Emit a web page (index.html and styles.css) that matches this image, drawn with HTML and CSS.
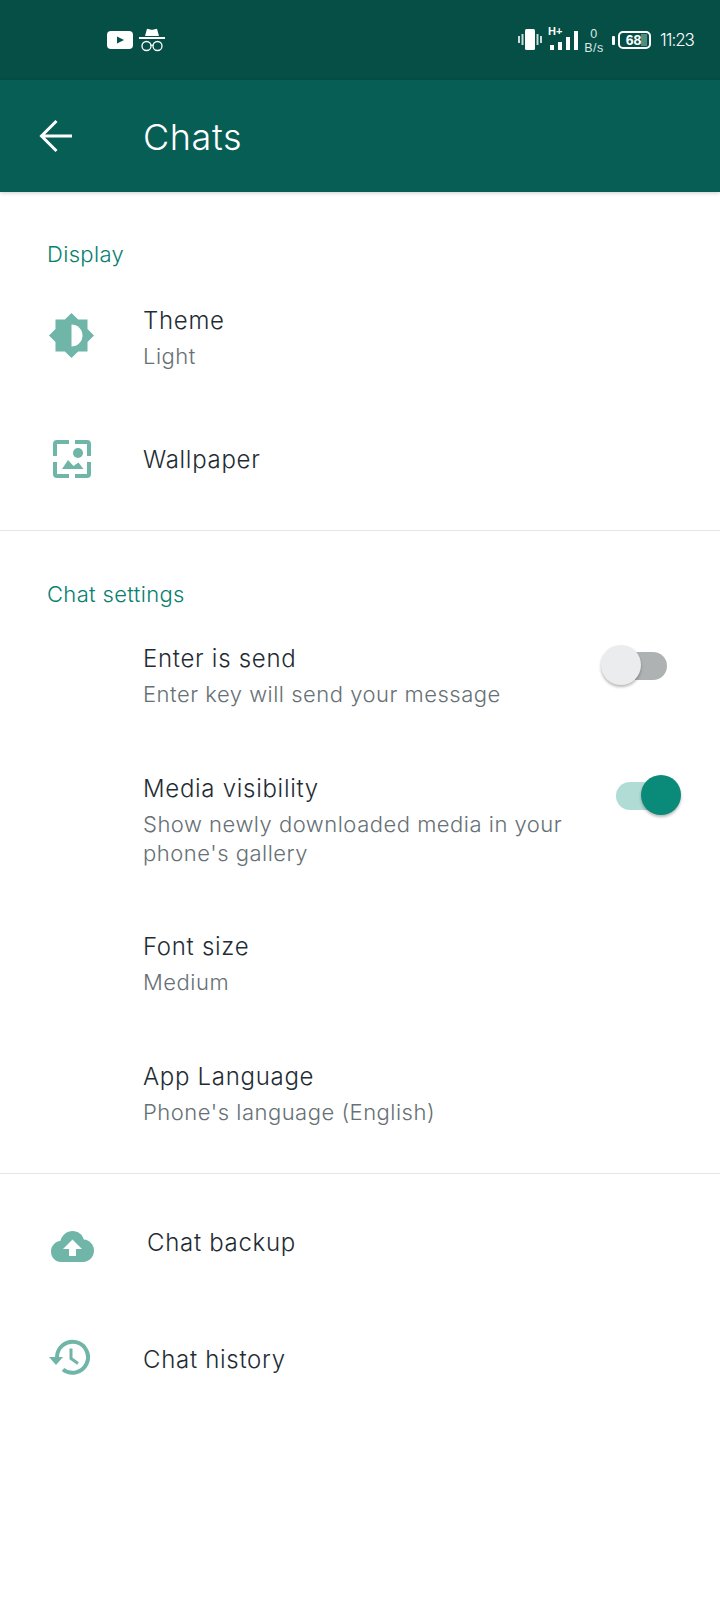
FILE: index.html
```html
<!DOCTYPE html>
<html lang="en">
<head>
<meta charset="utf-8">
<title>Chats</title>
<link rel="stylesheet" href="styles.css">
</head>
<body>
<div class="page">
  <header class="status">
    <div class="status-left">
      <svg class="ic-yt" viewBox="0 0 26 18"><path fill="#fff" d="M4 0h18a4 4 0 0 1 4 4v10a4 4 0 0 1-4 4H4a4 4 0 0 1-4-4V4a4 4 0 0 1 4-4z"/><path fill="#06514a" d="M10 5.500v7l7-3.500z"/></svg>
      <svg class="ic-spy" viewBox="0 0 26 24"><path fill="#fff" d="M6 8l1.800-6.500q.3-1 1.300-.6l2.100.6q1.800.5 3.600 0l2.100-.6q1-.4 1.300.6L20 8z"/><rect fill="#fff" y="9" width="26" height="2"/><g fill="none" stroke="#fff" stroke-width="1.300"><circle cx="7.500" cy="18" r="4.500"/><circle cx="18.500" cy="18" r="4.500"/><path d="M12 17.500q1-.8 2 0"/></g></svg>
    </div>
    <div class="status-right">
      <svg class="ic-vib" viewBox="0 0 24 24"><rect fill="#fff" x="7" y="1" width="10" height="21" rx="1.500"/><rect fill="#fff" opacity=".8" x="3.500" y="6" width="2" height="11"/><rect fill="#fff" opacity=".8" x="18.500" y="6" width="2" height="11"/><rect fill="#fff" opacity=".8" x="0" y="8" width="2" height="7"/><rect fill="#fff" opacity=".8" x="22" y="8" width="2" height="7"/></svg>
      <div class="signal">
        <span class="net">H+</span>
        <div class="bars"><i class="b1"></i><i class="b2"></i><i class="b3"></i><i class="b4"></i></div>
      </div>
      <div class="speed"><span>0</span><span>B/s</span></div>
      <i class="batt-side"></i>
      <div class="battery"><i class="batt-fill"></i><span class="batt-num">68</span></div>
      <span class="clock">11:23</span>
    </div>
  </header>

  <div class="toolbar">
    <svg class="ic-back" viewBox="0 0 34 34"><path fill="none" stroke="#fff" stroke-width="3" d="M33 17H3M17.500 2L2.500 17l15 15"/></svg>
    <h1 class="title">Chats</h1>
  </div>

  <main>
    <section class="group group-display">
      <h2 class="group-title">Display</h2>
      <div class="row row-theme">
        <div class="icon-cell">
          <svg class="ic-theme" viewBox="0 0 45 45"><path fill="#6fb5a8" d="M22.500 0l6.600 6.500h9.400v9.400L45 22.500l-6.500 6.600v9.400h-9.400L22.500 45l-6.600-6.500H6.500v-9.400L0 22.500l6.500-6.600V6.500h9.400z"/><path fill="#fff" d="M22.500 11.500a11 11 0 0 1 0 22z"/></svg>
        </div>
        <div class="text"><div class="name">Theme</div><div class="sub">Light</div></div>
      </div>
      <div class="row row-wall">
        <div class="icon-cell">
          <svg class="ic-wall" viewBox="0 0 38 38"><g fill="none" stroke="#6fb5a8" stroke-width="4"><path d="M2 16V4q0-2 2-2h12M22 2h12q2 0 2 2v12M36 22v12q0 2-2 2H22M16 36H4q-2 0-2-2V22"/></g><circle fill="#6fb5a8" cx="25" cy="13" r="5"/><path fill="#6fb5a8" d="M9 29l6-9 5.500 6 5-3.500 5 6.500z"/></svg>
        </div>
        <div class="text"><div class="name">Wallpaper</div></div>
      </div>
    </section>

    <section class="group group-chat">
      <h2 class="group-title">Chat settings</h2>
      <div class="row row-enter">
        <div class="icon-cell"></div>
        <div class="text"><div class="name">Enter is send</div><div class="sub">Enter key will send your message</div></div>
        <div class="switch switch-off"><i class="track"></i><i class="thumb"></i></div>
      </div>
      <div class="row row-media">
        <div class="icon-cell"></div>
        <div class="text"><div class="name">Media visibility</div><div class="sub">Show newly downloaded media in your<br>phone's gallery</div></div>
        <div class="switch switch-on"><i class="track"></i><i class="thumb"></i></div>
      </div>
      <div class="row row-font">
        <div class="icon-cell"></div>
        <div class="text"><div class="name">Font size</div><div class="sub">Medium</div></div>
      </div>
      <div class="row row-lang">
        <div class="icon-cell"></div>
        <div class="text"><div class="name">App Language</div><div class="sub">Phone's language (English)</div></div>
      </div>
    </section>

    <section class="group group-last">
      <div class="row row-backup">
        <div class="icon-cell">
          <svg class="ic-cloud" viewBox="0 0 43 31"><path fill="#6fb5a8" fill-rule="evenodd" d="M21.500 0c5.500 0 10 3.500 11.300 8.500 5.500.5 10.200 5 10.200 11 0 6.500-5 11.500-11 11.500H10C4.500 31 0 26.500 0 20.500c0-5.500 4-10 9.300-10.500C11 4 16 0 21.500 0zM21.500 8.500L12 18h6v7h7v-7h6z"/></svg>
        </div>
        <div class="text text-nudge"><div class="name">Chat backup</div></div>
      </div>
      <div class="row row-history">
        <div class="icon-cell">
          <svg class="ic-history" viewBox="0 0 41 36"><path fill="none" stroke="#6fb5a8" stroke-width="4" d="M8 18a15.500 15.500 0 1 1 6 12.500"/><path fill="#6fb5a8" d="M0 18h14l-7 8z"/><path fill="none" stroke="#6fb5a8" stroke-width="3" d="M22 9.500v10l7 5"/></svg>
        </div>
        <div class="text"><div class="name">Chat history</div></div>
      </div>
    </section>
  </main>
</div>
</body>
</html>
```
FILE: styles.css
```css
* { box-sizing: border-box; }
html, body { margin: 0; padding: 0; }
body { background: #fff; font-family: "Inter", "Liberation Sans", sans-serif; font-weight: 300; }
.page { width: 720px; height: 1600px; overflow: hidden; background: #fff; }

.status { height: 80px; background: #054f47; display: flex; align-items: center; justify-content: space-between; padding: 0 24px 0 107px; color: #fff; }
.status-left { display: flex; align-items: center; gap: 6px; }
.ic-yt { width: 26px; height: 18px; display: block; }
.ic-spy { width: 26px; height: 24px; display: block; }
.status-right { display: flex; align-items: center; }
.ic-vib { width: 24px; height: 24px; display: block; margin-right: 6px; }
.signal { position: relative; width: 28px; height: 28px; margin-right: 7px; }
.net { position: absolute; left: 0; top: 0; font: 700 11px/10px "Liberation Sans", sans-serif; letter-spacing: 0; }
.bars { position: absolute; left: 2px; bottom: 4px; display: flex; align-items: flex-end; gap: 4.500px; }
.bars i { display: block; width: 3.500px; background: #fff; }
.b1 { height: 5px; } .b2 { height: 8px; } .b3 { height: 13px; } .b4 { height: 19px; }
.speed { display: flex; flex-direction: column; align-items: center; width: 22px; font: 400 12.500px/14.500px "Liberation Sans", sans-serif; letter-spacing: .4px; color: #dce8e5; margin-right: 7px; padding-top: 2px; }
.speed span { display: block; }
.batt-side { display: block; width: 3px; height: 9px; background: #fff; border-radius: 1px; margin-right: 3px; }
.battery { position: relative; width: 33px; height: 18px; border: 2px solid #fff; border-radius: 5px; display: flex; align-items: center; justify-content: center; }
.batt-fill { position: absolute; left: 21px; top: 1px; bottom: 1px; right: 2px; background: #4f8d81; }
.batt-num { position: relative; font: 700 14px/14px "Liberation Sans", sans-serif; margin-right: 2px; }
.clock { width: 36px; margin-left: 9px; font-size: 17px; line-height: 22px; font-weight: 300; letter-spacing: -1px; white-space: nowrap; }

.toolbar { height: 112px; background: #075e54; display: flex; align-items: center; box-shadow: 0 1px 4px rgba(0,0,0,.2); position: relative; }
.ic-back { width: 34px; height: 34px; display: block; margin: 0 0 0 39px; }
.title { margin: 2px 0 0 70px; font-size: 36px; line-height: 44px; font-weight: 300; color: #fff; letter-spacing: .6px; }

.group { border-bottom: 1px solid #e2e5e4; }
.group-title { margin: 0; padding-left: 47px; font-size: 22px; line-height: 28px; font-weight: 300; color: #07806f; letter-spacing: .35px; }
.group-display { height: 339px; padding-top: 48px; }
.group-chat { height: 643px; padding-top: 49px; }
.group-last { border-bottom: 0; padding-top: 34px; }

.row { display: flex; align-items: flex-start; }
.icon-cell { width: 143px; flex: none; display: flex; justify-content: flex-start; }
.text { flex: 1; min-width: 0; padding-top: 1px; }
.text-nudge { margin-left: 4px; }
.name { font-size: 24px; line-height: 32px; color: #1f2c34; font-weight: 300; letter-spacing: .7px; }
.sub { font-size: 22px; line-height: 29px; color: #667075; font-weight: 300; margin-top: 5px; letter-spacing: .5px; white-space: nowrap; }

.ic-theme { width: 45px; height: 45px; margin: 9px 0 0 49px; display: block; }
.ic-wall { width: 38px; height: 38px; margin: -3px 0 0 53px; display: block; }
.ic-cloud { width: 43px; height: 31px; margin: 5px 0 0 51px; display: block; }
.ic-history { width: 41px; height: 36px; margin: -4px 0 0 49px; display: block; }

.row-theme { margin-top: 16px; height: 155px; padding-top: 20px; }
.row-wall { padding-top: 4px; }
.row-enter { margin-top: 34px; height: 130px; }
.row-media { height: 158px; }
.row-font { height: 130px; }
.row-lang { height: 96px; }
.row-backup { height: 118px; padding-top: 18px; }
.row-history { padding-top: 17px; }

.switch { position: relative; flex: none; width: 84px; height: 42px; }
.track { position: absolute; display: block; top: 9px; width: 46px; height: 28px; border-radius: 14px; }
.thumb { position: absolute; display: block; top: 2px; width: 40px; height: 40px; border-radius: 50%; box-shadow: 0 2px 3px rgba(0,0,0,.28); }
.switch-off { margin-right: 35px; margin-top: 1px; }
.switch-off .track { left: 20px; background: #aeb2b3; }
.switch-off .thumb { left: 0; background: #ebeced; }
.switch-on { margin-top: 1px; margin-right: 39px; }
.switch-on .track { left: 19px; background: #b1dbd5; }
.switch-on .thumb { left: 44px; background: #0a8a78; }
```
